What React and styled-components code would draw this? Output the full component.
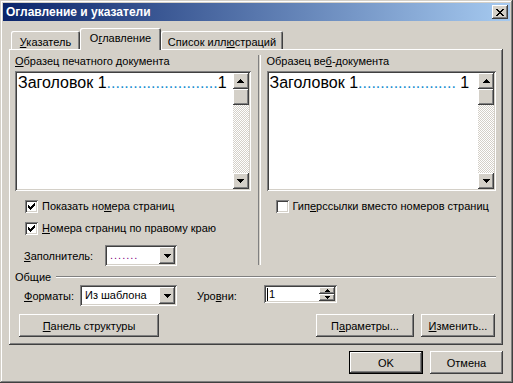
import React from 'react';
import styled, { createGlobalStyle, css } from 'styled-components';

const FACE = '#d4d0c8';

const GlobalStyle = createGlobalStyle`
  body {
    margin: 0;
    background: ${FACE};
    font-family: "Liberation Sans", Arial, sans-serif;
    font-size: 11px;
    color: #000;
  }
  u { text-decoration-thickness: 1px; text-underline-offset: 1px; }
`;

const raised = css`
  box-shadow: inset -1px -1px #404040, inset 1px 1px #fff,
    inset -2px -2px #808080, inset 2px 2px ${FACE};
`;

const sunken = css`
  box-shadow: inset 1px 1px #808080, inset -1px -1px #fff,
    inset 2px 2px #404040, inset -2px -2px ${FACE};
`;

const ArrowUp = ({ small }) =>
  small ? (
    <svg width="5" height="3" viewBox="0 0 5 3" shapeRendering="crispEdges">
      <path d="M2 0h1v1h1v1h1v1H0V2h1V1h1z" fill="#000" />
    </svg>
  ) : (
    <svg width="7" height="4" viewBox="0 0 7 4" shapeRendering="crispEdges">
      <path d="M3 0h1v1h1v1h1v1h1v1H0V3h1V2h1V1h1z" fill="#000" />
    </svg>
  );

const ArrowDown = ({ small }) =>
  small ? (
    <svg width="5" height="3" viewBox="0 0 5 3" shapeRendering="crispEdges">
      <path d="M0 0h5v1H4v1H3v1H2V2H1V1H0z" fill="#000" />
    </svg>
  ) : (
    <svg width="7" height="4" viewBox="0 0 7 4" shapeRendering="crispEdges">
      <path d="M0 0h7v1H6v1H5v1H4v1H3V3H2V2H1V1H0z" fill="#000" />
    </svg>
  );

const Window = styled.div`
  width: 513px;
  height: 383px;
  box-sizing: border-box;
  padding: 3px;
  background: ${FACE};
  box-shadow: inset -1px -1px #404040, inset 1px 1px ${FACE},
    inset -2px -2px #808080, inset 2px 2px #fff;
  display: flex;
  flex-direction: column;
`;

const TitleBar = styled.div`
  height: 18px;
  display: flex;
  align-items: center;
  padding-left: 3px;
  background: linear-gradient(to right, #0a246a, #a6caf0);
`;

const Title = styled.div`
  flex: 1;
  color: #fff;
  font-weight: bold;
  font-size: 12px;
`;

const CloseButton = styled.div`
  width: 16px;
  height: 14px;
  margin-right: 2px;
  background: ${FACE};
  ${raised};
  display: flex;
  align-items: center;
  justify-content: center;
`;

const Body = styled.div`
  padding: 7px 7px 0 6px;
  display: flex;
  flex-direction: column;
`;

const TabStrip = styled.div`
  height: 21px;
  display: flex;
  align-items: flex-start;
  padding-left: 2px;
`;

const Tab = styled.div`
  width: ${p => p.$w}px;
  height: ${p => (p.$active ? 22 : 18)}px;
  margin-top: ${p => (p.$active ? 0 : 3)}px;
  box-sizing: border-box;
  padding-top: ${p => (p.$active ? 4 : 5)}px;
  text-align: center;
  border-radius: 2px 2px 0 0;
  background: ${FACE};
  box-shadow: inset 1px 1px #fff, inset -1px 0 #404040, inset -2px 0 #808080;
  position: relative;
  z-index: ${p => (p.$active ? 1 : 0)};
`;

const TabPanel = styled.div`
  width: 494px;
  box-sizing: border-box;
  padding: 6px 7px 8px 6px;
  ${raised};
  display: flex;
  flex-direction: column;
`;

const Columns = styled.div`
  display: flex;
`;

const Column = styled.div`
  width: ${p => p.$w}px;
  display: flex;
  flex-direction: column;
`;

const Separator = styled.div`
  width: 1px;
  margin: 0 6px 1px 7px;
  border-left: 1px solid #808080;
  border-right: 1px solid #fff;
`;

const FieldLabel = styled.div`
  height: 16px;
  line-height: 13px;
`;

const PreviewBox = styled.div`
  height: 120px;
  box-sizing: border-box;
  padding: 2px;
  background: #fff;
  ${sunken};
  display: flex;
`;

const PreviewText = styled.div`
  flex: 1;
  min-width: 0;
  padding-left: 1px;
  font-size: 16px;
  line-height: 19px;
  white-space: nowrap;
`;

const Leader = styled.span`
  color: #1b8fd0;
`;

const ScrollBar = styled.div`
  width: 16px;
  display: flex;
  flex-direction: column;
`;

const ScrollButton = styled.div`
  height: 16px;
  background: ${FACE};
  ${raised};
  display: flex;
  align-items: center;
  justify-content: center;
`;

const ScrollTrack = styled.div`
  flex: 1;
  background-color: #fff;
  background-image: conic-gradient(${FACE} 25%, #fff 0 50%, ${FACE} 0 75%, #fff 0);
  background-size: 2px 2px;
`;

const CheckList = styled.div`
  margin-top: 4px;
  padding-left: ${p => p.$indent}px;
`;

const CheckRow = styled.div`
  height: 22px;
  display: flex;
  align-items: center;
  gap: 4px;
`;

const CheckBox = styled.div`
  width: 13px;
  height: 13px;
  box-sizing: border-box;
  background: #fff;
  ${sunken};
  display: flex;
  align-items: center;
  justify-content: center;
`;

const FieldRow = styled.div`
  display: flex;
  align-items: center;
  margin-top: ${p => p.$top || 0}px;
  padding-left: 9px;
`;

const RowLabel = styled.div`
  width: ${p => p.$w}px;
  margin-left: ${p => p.$ml || 0}px;
`;

const Combo = styled.div`
  width: ${p => p.$w}px;
  height: 21px;
  box-sizing: border-box;
  padding: 2px;
  background: #fff;
  ${sunken};
  display: flex;
`;

const ComboValue = styled.div`
  flex: 1;
  padding-left: 3px;
  line-height: 17px;
  color: ${p => p.$color || '#000'};
  letter-spacing: ${p => p.$spacing || 0}px;
`;

const ComboButton = styled.div`
  width: 16px;
  background: ${FACE};
  ${raised};
  display: flex;
  align-items: center;
  justify-content: center;
`;

const Spin = styled.div`
  width: 73px;
  height: 18px;
  align-self: flex-start;
  box-sizing: border-box;
  padding: 2px;
  background: #fff;
  ${sunken};
  display: flex;
`;

const SpinValue = styled.div`
  flex: 1;
  display: flex;
  align-items: center;
  padding-left: 1px;
  line-height: 14px;
`;

const Caret = styled.span`
  width: 1px;
  height: 13px;
  background: #000;
  margin-right: 1px;
`;

const SpinButtons = styled.div`
  width: 16px;
  display: flex;
  flex-direction: column;
`;

const SpinButton = styled.div`
  flex: 1;
  background: ${FACE};
  ${raised};
  display: flex;
  align-items: center;
  justify-content: center;
`;

const GroupHeader = styled.div`
  height: 13px;
  margin-top: 4px;
  display: flex;
  align-items: center;
  gap: 5px;
`;

const GroupLine = styled.div`
  flex: 1;
  border-top: 1px solid #808080;
  border-bottom: 1px solid #fff;
  margin-top: 1px;
`;

const PanelButtons = styled.div`
  display: flex;
  gap: 7px;
  margin-top: 8px;
  padding: 0 1px 0 4px;
`;

const Button = styled.div`
  width: ${p => p.$w}px;
  height: 23px;
  box-sizing: border-box;
  display: flex;
  align-items: center;
  justify-content: center;
  background: ${FACE};
  ${raised};
  ${p =>
    p.$default &&
    css`
      box-shadow: inset 0 0 0 1px #000, inset -2px -2px #404040, inset 2px 2px #fff,
        inset -3px -3px #808080;
    `}
  margin-left: ${p => (p.$push ? 'auto' : '0')};
`;

const DialogButtons = styled.div`
  display: flex;
  justify-content: flex-end;
  gap: 7px;
  margin-top: 6px;
`;

const Preview = ({ dots, spaced }) => (
  <PreviewBox>
    <PreviewText>
      Заголовок 1<Leader>{'.'.repeat(dots)}</Leader>
      {spaced ? ' 1' : '1'}
    </PreviewText>
    <ScrollBar>
      <ScrollButton>
        <ArrowUp />
      </ScrollButton>
      <ScrollButton />
      <ScrollTrack />
      <ScrollButton>
        <ArrowDown />
      </ScrollButton>
    </ScrollBar>
  </PreviewBox>
);

const Check = () => (
  <svg width="7" height="7" viewBox="0 0 7 7" shapeRendering="crispEdges">
    <path
      d="M6 0h1v3H6v1H5v1H4v1H3v1H2V6H1V5H0V2h1v1h1v1h1V3h1V2h1V1h1z"
      fill="#000"
    />
  </svg>
);

const App = () => (
  <>
    <GlobalStyle />
    <Window>
      <TitleBar>
        <Title>Оглавление и указатели</Title>
        <CloseButton>
          <svg width="8" height="7" viewBox="0 0 8 7" shapeRendering="crispEdges">
            <path
              d="M0 0h2v1h1v1h2V1h1V0h2v1H7v1H6v1H5v1h1v1h1v1h1v1H6V6H5V5H3v1H2v1H0V6h1V5h1V4h1V3H2V2H1V1H0z"
              fill="#000"
            />
          </svg>
        </CloseButton>
      </TitleBar>
      <Body>
        <TabStrip>
          <Tab $w={69}>
            <u>У</u>казатель
          </Tab>
          <Tab $w={81} $active>
            О<u>г</u>лавление
          </Tab>
          <Tab $w={122}>
            Список илл<u>ю</u>страций
          </Tab>
        </TabStrip>
        <TabPanel>
          <Columns>
            <Column $w={236}>
              <FieldLabel>
                <u>О</u>бразец печатного документа
              </FieldLabel>
              <Preview dots={25} />
              <CheckList $indent={10}>
                <CheckRow>
                  <CheckBox>
                    <Check />
                  </CheckBox>
                  <span>
                    Показать но<u>м</u>ера страниц
                  </span>
                </CheckRow>
                <CheckRow>
                  <CheckBox>
                    <Check />
                  </CheckBox>
                  <span>
                    <u>Н</u>омера страниц по правому краю
                  </span>
                </CheckRow>
              </CheckList>
              <FieldRow $top={6}>
                <RowLabel $w={81}>
                  <u>З</u>аполнитель:
                </RowLabel>
                <Combo $w={72}>
                  <ComboValue $color="#800080" $spacing={1}>
                    .......
                  </ComboValue>
                  <ComboButton>
                    <ArrowDown />
                  </ComboButton>
                </Combo>
              </FieldRow>
            </Column>
            <Separator />
            <Column $w={230}>
              <FieldLabel>
                Образец ве<u>б</u>-документа
              </FieldLabel>
              <Preview dots={22} spaced />
              <CheckList $indent={9}>
                <CheckRow>
                  <CheckBox />
                  <span>
                    Гип<u>е</u>рссылки вместо номеров страниц
                  </span>
                </CheckRow>
              </CheckList>
            </Column>
          </Columns>
          <GroupHeader>
            <span>Общие</span>
            <GroupLine />
          </GroupHeader>
          <FieldRow $top={2}>
            <RowLabel $w={56}>
              <u>Ф</u>орматы:
            </RowLabel>
            <Combo $w={97}>
              <ComboValue>Из шаблона</ComboValue>
              <ComboButton>
                <ArrowDown />
              </ComboButton>
            </Combo>
            <RowLabel $w={67} $ml={20}>
              Уро<u>в</u>ни:
            </RowLabel>
            <Spin>
              <SpinValue>
                <Caret />1
              </SpinValue>
              <SpinButtons>
                <SpinButton>
                  <ArrowUp small />
                </SpinButton>
                <SpinButton>
                  <ArrowDown small />
                </SpinButton>
              </SpinButtons>
            </Spin>
          </FieldRow>
          <PanelButtons>
            <Button $w={140}>
              <span>
                <u>П</u>анель структуры
              </span>
            </Button>
            <Button $w={98} $push>
              <span>
                П<u>а</u>раметры...
              </span>
            </Button>
            <Button $w={74}>
              <span>
                <u>И</u>зменить...
              </span>
            </Button>
          </PanelButtons>
        </TabPanel>
        <DialogButtons>
          <Button $w={74} $default>
            OK
          </Button>
          <Button $w={73}>Отмена</Button>
        </DialogButtons>
      </Body>
    </Window>
  </>
);

export default App;
